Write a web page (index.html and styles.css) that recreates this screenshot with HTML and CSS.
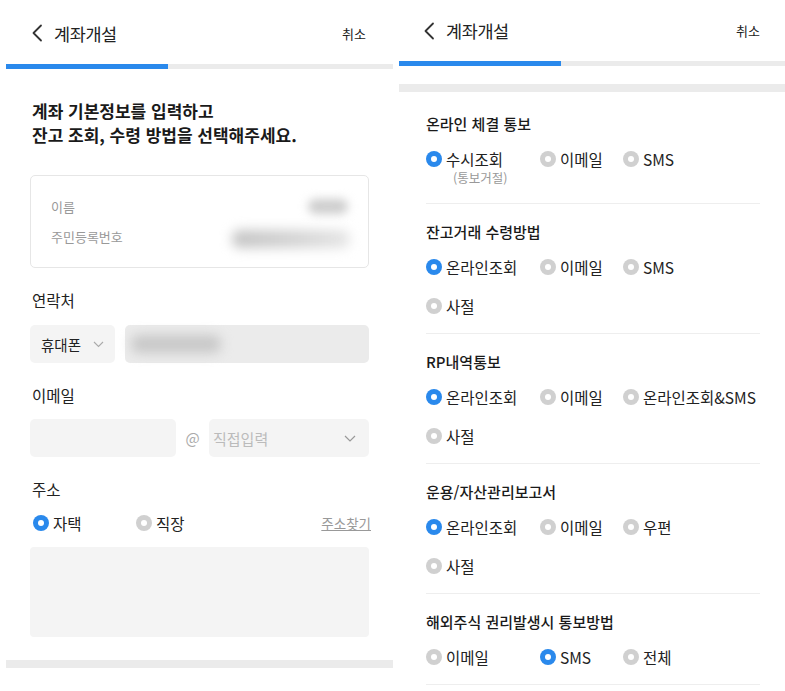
FILE: index.html
```html
<!DOCTYPE html>
<html lang="ko">
<head>
    <meta charset="UTF-8">
    <meta name="viewport" content="width=device-width, initial-scale=1.0">
    <title>계좌개설</title>
    <link rel="stylesheet" href="styles.css">
</head>
<body>
    <div class="screens">
        <section class="screen screen-left">
            <header class="top-bar">
                <span class="back">
                    <svg width="12" height="18" viewBox="0 0 12 18"><polyline points="10,1.5 2.5,9 10,16.5" fill="none" stroke="#333" stroke-width="1.8" stroke-linecap="round" stroke-linejoin="round"/></svg>
                </span>
                <h1 class="title">계좌개설</h1>
                <span class="cancel">취소</span>
            </header>
            <div class="progress"><div class="progress-fill"></div></div>

            <div class="form">
                <p class="lead">계좌 기본정보를 입력하고<br>잔고 조회, 수령 방법을 선택해주세요.</p>

                <div class="info-card">
                    <div class="info-row">
                        <span class="info-label">이름</span>
                        <span class="masked masked-name"></span>
                    </div>
                    <div class="info-row">
                        <span class="info-label">주민등록번호</span>
                        <span class="masked masked-id"></span>
                    </div>
                </div>

                <div class="field-label">연락처</div>
                <div class="field-row">
                    <div class="box select select-phone">
                        <span>휴대폰</span>
                        <svg width="11" height="7" viewBox="0 0 11 7"><polyline points="1,1 5.5,5.5 10,1" fill="none" stroke="#aaa" stroke-width="1.1"/></svg>
                    </div>
                    <div class="box input-filled"><span class="masked masked-phone"></span></div>
                </div>

                <div class="field-label">이메일</div>
                <div class="field-row field-row-email">
                    <div class="box email-id"></div>
                    <span class="at">@</span>
                    <div class="box select select-domain">
                        <span class="placeholder">직접입력</span>
                        <svg width="12" height="7" viewBox="0 0 12 7"><polyline points="1,1 6,6 11,1" fill="none" stroke="#999" stroke-width="1.2"/></svg>
                    </div>
                </div>

                <div class="field-label">주소</div>
                <div class="addr-row">
                    <label class="option addr-option"><span class="radio on"></span>자택</label>
                    <label class="option addr-option"><span class="radio"></span>직장</label>
                    <a class="addr-find">주소찾기</a>
                </div>
                <div class="box addr-box"></div>
            </div>
            <div class="band band-bottom"></div>
        </section>

        <section class="screen screen-right">
            <header class="top-bar top-bar-right">
                <span class="back">
                    <svg width="12" height="18" viewBox="0 0 12 18"><polyline points="10,1.5 2.5,9 10,16.5" fill="none" stroke="#333" stroke-width="1.8" stroke-linecap="round" stroke-linejoin="round"/></svg>
                </span>
                <h1 class="title">계좌개설</h1>
                <span class="cancel">취소</span>
            </header>
            <div class="progress"><div class="progress-fill"></div></div>
            <div class="band band-top"></div>

            <div class="notice-list">
                <div class="notice notice-first">
                    <h2 class="notice-title">온라인 체결 통보</h2>
                    <div class="options">
                        <div class="option-wrap">
                            <label class="option"><span class="radio on"></span>수시조회</label>
                            <div class="option-sub">(통보거절)</div>
                        </div>
                        <label class="option"><span class="radio"></span>이메일</label>
                        <label class="option"><span class="radio"></span>SMS</label>
                    </div>
                </div>

                <div class="notice">
                    <h2 class="notice-title">잔고거래 수령방법</h2>
                    <div class="options">
                        <label class="option"><span class="radio on"></span>온라인조회</label>
                        <label class="option"><span class="radio"></span>이메일</label>
                        <label class="option"><span class="radio"></span>SMS</label>
                        <label class="option"><span class="radio"></span>사절</label>
                    </div>
                </div>

                <div class="notice">
                    <h2 class="notice-title">RP내역통보</h2>
                    <div class="options">
                        <label class="option"><span class="radio on"></span>온라인조회</label>
                        <label class="option"><span class="radio"></span>이메일</label>
                        <label class="option"><span class="radio"></span>온라인조회&amp;SMS</label>
                        <label class="option"><span class="radio"></span>사절</label>
                    </div>
                </div>

                <div class="notice">
                    <h2 class="notice-title">운용/자산관리보고서</h2>
                    <div class="options">
                        <label class="option"><span class="radio on"></span>온라인조회</label>
                        <label class="option"><span class="radio"></span>이메일</label>
                        <label class="option"><span class="radio"></span>우편</label>
                        <label class="option"><span class="radio"></span>사절</label>
                    </div>
                </div>

                <div class="notice">
                    <h2 class="notice-title">해외주식 권리발생시 통보방법</h2>
                    <div class="options">
                        <label class="option"><span class="radio"></span>이메일</label>
                        <label class="option"><span class="radio on"></span>SMS</label>
                        <label class="option"><span class="radio"></span>전체</label>
                    </div>
                </div>
            </div>
        </section>
    </div>
</body>
</html>
```

FILE: styles.css
```css
body {
    margin: 0;
    font-family: "Noto Sans CJK KR", "Noto Sans", sans-serif;
    background-color: #fff;
    color: #222;
}
.screens {
    display: flex;
    gap: 6px;
    padding-left: 6px;
}
.screen {
    background-color: #fff;
}
.screen-left {
    width: 387px;
}
.screen-right {
    width: 386px;
}

/* header */
.top-bar {
    height: 64px;
    display: flex;
    align-items: center;
    padding: 2px 27px 0 25px;
    box-sizing: border-box;
}
.top-bar-right {
    height: 61px;
    padding: 0 25px 0 24px;
}
.back {
    display: flex;
    width: 12px;
    height: 18px;
}
.title {
    margin: 0 0 0 11px;
    font-size: 17.5px;
    font-weight: 400;
    letter-spacing: -0.4px;
    color: #222;
}
.cancel {
    margin-left: auto;
    font-size: 13px;
    color: #222;
}
.progress {
    height: 5px;
    background-color: #ebebeb;
}
.progress-fill {
    width: 162px;
    height: 100%;
    background-color: #2a89ec;
}
.band {
    height: 8px;
    background-color: #ebebeb;
}
.band-top {
    margin-top: 18px;
}
.band-bottom {
    margin-top: 23px;
}

/* left form */
.form {
    padding: 0 24px;
}
.lead {
    margin: 30px 0 0 2px;
    font-size: 17px;
    line-height: 24px;
    font-weight: 700;
    color: #1a1a1a;
}
.info-card {
    margin-top: 28px;
    border: 1px solid #e6e6e6;
    border-radius: 5px;
    padding: 15px 18px 16px 20px;
}
.info-row {
    display: flex;
    justify-content: space-between;
    align-items: center;
    height: 30px;
}
.info-label {
    font-size: 13px;
    color: #999;
}
.masked {
    display: block;
    background-color: #cfcfcf;
    border-radius: 8px;
}
.masked-name {
    width: 40px;
    height: 15px;
    margin-right: 2px;
    background-color: #cdcdcd;
    filter: blur(5px);
}
.masked-id {
    width: 118px;
    height: 18px;
    margin-top: 6px;
    background: linear-gradient(to right, #c4c4c4, #d4d4d4 55%, #e6e6e6);
    filter: blur(6px);
}
.masked-phone {
    width: 90px;
    height: 18px;
    margin-left: 6px;
    background-color: #c8c8c8;
    filter: blur(6px);
}
.field-label {
    margin: 21px 0 0 2px;
    font-size: 15.5px;
    line-height: 22px;
    color: #222;
}
.field-row {
    display: flex;
    gap: 10px;
    margin-top: 14px;
    height: 38px;
}
.field-row-email {
    gap: 0;
    margin-top: 13px;
}
.box {
    background-color: #f4f4f4;
    border-radius: 5px;
}
.select {
    display: flex;
    align-items: center;
    box-sizing: border-box;
    padding-left: 11px;
    font-size: 14.5px;
    color: #222;
}
.select-phone {
    width: 85px;
    gap: 12px;
}
.input-filled {
    flex: 1;
    display: flex;
    align-items: center;
    background-color: #ebebeb;
}
.email-id {
    width: 146px;
}
.at {
    width: 33px;
    text-align: center;
    line-height: 38px;
    font-size: 15px;
    color: #aaa;
}
.select-domain {
    flex: 1;
    justify-content: space-between;
    padding: 0 13px 0 4px;
}
.placeholder {
    font-size: 15px;
    color: #bbb;
}
.addr-row {
    display: flex;
    align-items: center;
    height: 22px;
    margin-top: 12px;
    padding-left: 3px;
}
.addr-option {
    width: 103px;
    font-size: 16px;
}
.addr-find {
    margin-left: auto;
    margin-right: -2px;
    font-size: 13.5px;
    color: #999;
    text-decoration: underline;
}
.addr-box {
    margin-top: 13px;
    height: 90px;
    border-radius: 4px;
}

/* radio */
.option {
    display: flex;
    align-items: center;
    gap: 4px;
    height: 22px;
    font-size: 15.5px;
    color: #222;
    white-space: nowrap;
}
.radio {
    position: relative;
    flex: none;
    width: 16px;
    height: 16px;
    border-radius: 50%;
    background-color: #d0d0d0;
}
.radio::after {
    content: "";
    position: absolute;
    left: 5px;
    top: 5px;
    width: 6px;
    height: 6px;
    border-radius: 50%;
    background-color: #fff;
}
.radio.on {
    background-color: #2a89ec;
}

/* right notices */
.notice-list {
    padding: 0 25px 0 27px;
}
.notice {
    padding: 17px 0 16px;
    border-bottom: 1px solid #eeeeee;
}
.notice-first {
    padding-top: 21px;
}
.notice-title {
    margin: 0;
    font-size: 15px;
    line-height: 22px;
    font-weight: 500;
    color: #1a1a1a;
}
.options {
    display: grid;
    grid-template-columns: 114px 83px auto;
    row-gap: 17px;
    margin-top: 13px;
}
.option-sub {
    margin: 1px 0 2px 27px;
    font-size: 12.5px;
    line-height: 14px;
    color: #999;
}
```
